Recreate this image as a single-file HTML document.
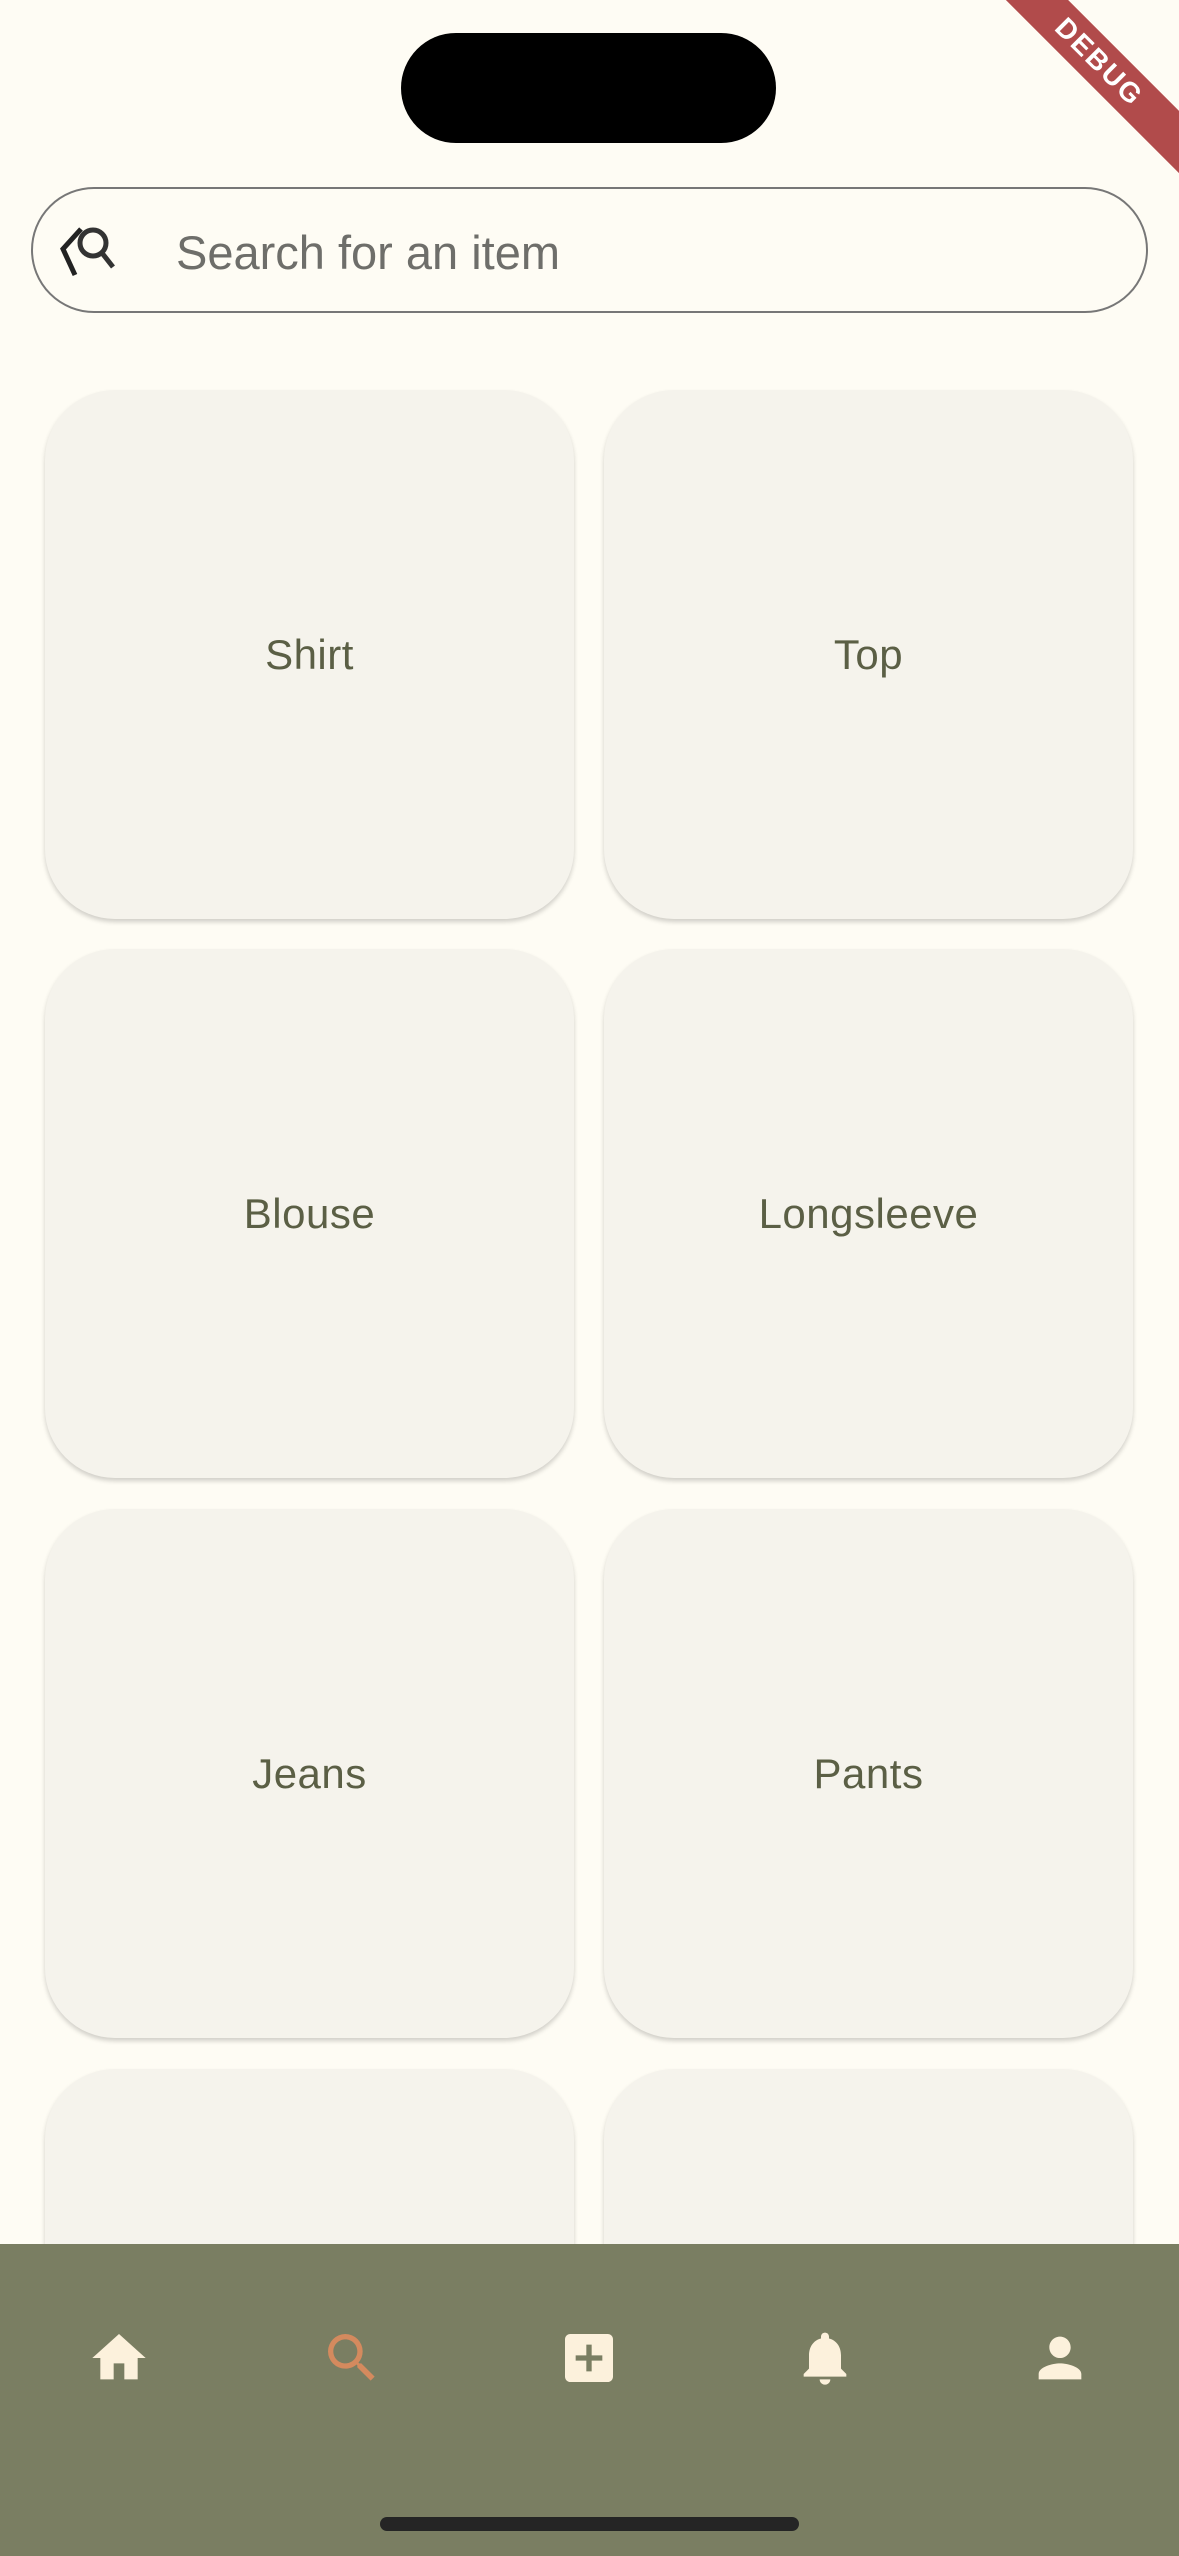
<!DOCTYPE html>
<html><head><meta charset="utf-8"><style>
html,body{margin:0;padding:0;width:1179px;height:2556px;overflow:hidden}
body{background:#fefcf4;position:relative;font-family:"Liberation Sans",sans-serif}
.wrap{position:absolute;left:0;top:0;width:1179px;height:2556px;overflow:hidden}
.notch{position:absolute;left:401px;top:33px;width:375px;height:110px;background:#000;border-radius:55px}
.search{position:absolute;left:31px;top:187px;width:1117px;height:126px;border:2px solid #777;border-radius:63px;box-sizing:border-box}
.search span{position:absolute;left:143px;top:36px;font-size:47px;color:#6e6e6a}
.card{position:absolute;width:529px;height:529px;background:#f5f3ec;border-radius:70px;box-shadow:0 3px 5px rgba(0,0,0,0.18);display:flex;align-items:center;justify-content:center;font-size:42px;color:#5b5f45;letter-spacing:0.5px}
.nav{position:absolute;left:0;top:2244px;width:1179px;height:312px;background:#7a7e62}
.ind{position:absolute;left:380px;top:2517px;width:419px;height:14px;border-radius:7px;background:#252525}
.ic{position:absolute;top:2326px;width:64px;height:64px}
.debug{position:absolute;right:-70px;top:40px;width:300px;height:44px;background:#b14b4b;transform:rotate(45deg);color:#fff;font-weight:bold;font-size:28px;text-align:center;line-height:44px;letter-spacing:2px}
</style></head><body><div class="wrap">
<div class="notch"></div>
<div class="debug">DEBUG</div>
<div class="search">
<svg style="position:absolute;left:14px;top:28px" width="90" height="70" viewBox="0 0 90 70"><path d="M34 12 L16 32 L28 58" fill="none" stroke="#222" stroke-width="5"/><circle cx="46" cy="26" r="13" fill="none" stroke="#333" stroke-width="5"/><path d="M55 36 L66 50" stroke="#333" stroke-width="5"/></svg>
<span>Search for an item</span></div>
<div class="card" style="left:45px;top:390px">Shirt</div>
<div class="card" style="left:604px;top:390px">Top</div>
<div class="card" style="left:45px;top:949px">Blouse</div>
<div class="card" style="left:604px;top:949px">Longsleeve</div>
<div class="card" style="left:45px;top:1509px">Jeans</div>
<div class="card" style="left:604px;top:1509px">Pants</div>
<div class="card" style="left:45px;top:2069px;height:300px"></div>
<div class="card" style="left:604px;top:2069px;height:300px"></div>
<div class="nav"></div>
<svg class="ic" style="left:87px" viewBox="0 0 24 24"><path fill="#fcf1dc" d="M10 20v-6h4v6h5v-8h3L12 3 2 12h3v8z"/></svg>
<svg class="ic" style="left:320px" viewBox="0 0 24 24"><path fill="#d48a5e" d="M15.5 14h-.79l-.28-.27A6.470 6.470 0 0016 9.5 6.5 6.5 0 109.5 16c1.61 0 3.09-.59 4.23-1.57l.27.28v.79l5 4.99L20.49 19l-4.99-5zm-6 0C7.01 14 5 11.99 5 9.5S7.01 5 9.5 5 14 7.010 14 9.5 11.99 14 9.5 14z"/></svg>
<svg class="ic" style="left:557px" viewBox="0 0 24 24"><path fill="#fcf1dc" d="M19 3H5a2 2 0 00-2 2v14a2 2 0 002 2h14a2 2 0 002-2V5a2 2 0 00-2-2zm-2 10h-4v4h-2v-4H7v-2h4V7h2v4h4v2z"/></svg>
<svg class="ic" style="left:793px" viewBox="0 0 24 24"><path fill="#fcf1dc" d="M12 22c1.1 0 2-.9 2-2h-4c0 1.1.9 2 2 2zm6-6v-5c0-3.07-1.63-5.64-4.5-6.32V4c0-.83-.67-1.5-1.5-1.5s-1.5.67-1.5 1.5v.68C7.64 5.36 6 7.92 6 11v5l-2 2v1h16v-1l-2-2z"/></svg>
<svg class="ic" style="left:1028px" viewBox="0 0 24 24"><path fill="#fcf1dc" d="M12 12c2.21 0 4-1.79 4-4s-1.79-4-4-4-4 1.79-4 4 1.79 4 4 4zm0 2c-2.67 0-8 1.34-8 4v2h16v-2c0-2.66-5.33-4-8-4z"/></svg>
<div class="ind"></div>
</div></body></html>
